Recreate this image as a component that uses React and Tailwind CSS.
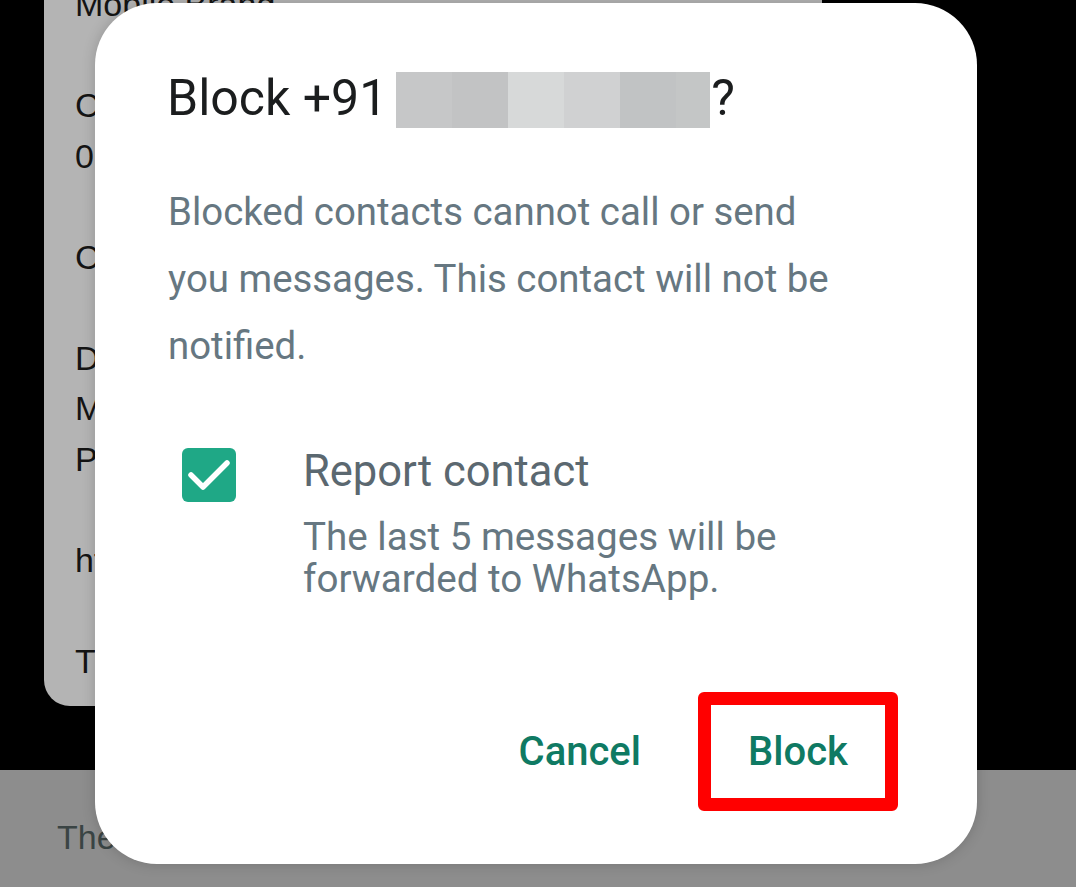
import React from "react";

const cardLines = [
  "Mobile Brand",
  "",
  "Carrier name",
  "0 bars",
  "",
  "Country code",
  "",
  "Device",
  "Model",
  "Platform",
  "",
  "https://",
  "",
  "Time zone",
];

const blurStripes = [
  "bg-[#c6c7c8] w-[56px]",
  "bg-[#c2c3c4] w-[56px]",
  "bg-[#d7d9d9] w-[56px]",
  "bg-[#d0d1d2] w-[56px]",
  "bg-[#c1c3c4] w-[56px]",
  "bg-[#c4c6c6] w-[34px]",
];

const CheckBox = () => (
  <div className="w-[54px] h-[54px] shrink-0 ml-[14px] rounded-[6px] bg-[#1fa886] flex items-center justify-center">
    <svg width="54" height="54" viewBox="0 0 54 54">
      <path
        d="M9 27 L21 39 L45 15"
        fill="none"
        stroke="#ffffff"
        strokeWidth="5.5"
        strokeLinecap="round"
        strokeLinejoin="round"
      />
    </svg>
  </div>
);

export default function App() {
  return (
    <div className="relative w-[1076px] h-[887px] overflow-hidden bg-black font-['Roboto',sans-serif]">
      {/* Background page */}
      <div className="flex flex-col h-full">
        <div className="ml-[44px] w-[778px] h-[706px] shrink-0 rounded-b-[26px] bg-[#b4b4b4] overflow-hidden pl-[31px] font-['Liberation_Sans',sans-serif] text-[34px] leading-[50.5px] text-[#141414]">
          <div className="-mt-[21px]">
            {cardLines.map((line, i) => (
              <div key={i} className="h-[50.5px] whitespace-nowrap">
                {line}
              </div>
            ))}
          </div>
        </div>
        <div className="mt-[64px] flex-1 bg-[#8d8d8d] pl-[57px] pt-[47px] font-['Liberation_Sans',sans-serif] text-[34px] leading-[40px] text-[#3a4444]">
          The contact has been blocked
        </div>
      </div>

      {/* Block dialog */}
      <div className="absolute left-[95px] top-[3px] w-[882px] h-[861px] rounded-[62px] bg-white shadow-[0_0_14px_rgba(0,0,0,0.18)] pl-[73px] pr-[79px] pt-[67px]">
        <div className="flex items-center h-[56px] text-[50px] leading-[56px] text-[#1b1d1e]">
          <span className="-ml-[1px]">Block +91</span>
          <div className="flex h-[56px] ml-[9px] mt-[3px]">
            {blurStripes.map((c, i) => (
              <div key={i} className={`h-full ${c}`} />
            ))}
          </div>
          <span className="ml-[1px]">?</span>
        </div>

        <p className="mt-[52px] text-[38.4px] leading-[67px] text-[#667781]">
          Blocked contacts cannot call or send
          <br />
          you messages. This contact will not be
          <br />
          notified.
        </p>

        <div className="flex items-start mt-[69px]">
          <CheckBox />
          <div className="ml-[67px]">
            <div className="text-[43.5px] leading-[48px] text-[#5b6870]">
              Report contact
            </div>
            <div className="mt-[20px] text-[38.6px] leading-[42px] text-[#667781]">
              The last 5 messages will be
              <br />
              forwarded to WhatsApp.
            </div>
          </div>
        </div>

        <div className="flex items-center justify-end mt-[92px]">
          <button className="text-[40px] leading-[48px] font-medium text-[#0f7a63]">
            Cancel
          </button>
          <button className="ml-[57px] w-[200px] h-[119px] border-[13px] border-[#ff0000] rounded-[6px] flex items-center justify-center text-[40px] leading-[48px] font-medium text-[#0f7a63]">
            Block
          </button>
        </div>
      </div>
    </div>
  );
}
